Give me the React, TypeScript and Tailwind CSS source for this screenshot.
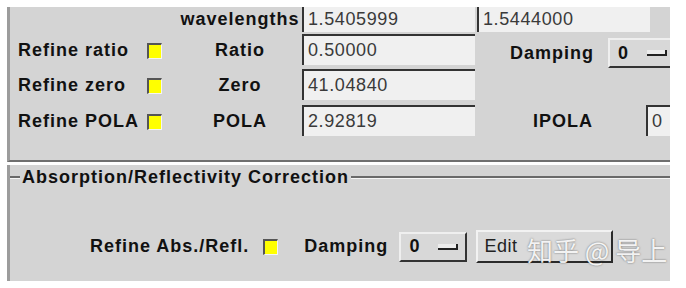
import React from "react";

function Field({ value, top = true, w = "w-[173px]" }: { value: string; top?: boolean; w?: string }) {
  return (
    <div
      className={`${w} shrink-0 h-full flex items-center bg-[#f0f0f0] border-l-2 border-l-[#333] pl-[4px] text-[18px] tracking-[0.6px] text-[#3a3a3a] font-normal ${
        top ? "border-t-2 border-t-[#333]" : ""
      }`}
    >
      {value}
    </div>
  );
}

function Check() {
  return (
    <div className="shrink-0 w-[15px] h-[16px] bg-[#ffff00] border-l-2 border-t-2 border-l-[#555] border-t-[#555] border-r border-b border-r-[#f4f4f4] border-b-[#f4f4f4]" />
  );
}

function Option({ w }: { w: string }) {
  return (
    <div
      className={`${w} shrink-0 h-[30px] flex items-center bg-[#d8d8d8] border-t-2 border-l-2 border-t-[#efefef] border-l-[#efefef] border-b-2 border-r-2 border-b-[#333] border-r-[#333]`}
    >
      <span className="pl-[8px] font-bold text-[18px]">0</span>
      <div className="ml-[18px] w-[20px] h-[6px] bg-[#ececec] border-b-2 border-r-2 border-b-[#222] border-r-[#222]" />
    </div>
  );
}

function App() {
  const rows = [
    { label: "Refine ratio", name: "Ratio", value: "0.50000" },
    { label: "Refine zero", name: "Zero", value: "41.04840" },
    { label: "Refine POLA", name: "POLA", value: "2.92819" },
  ];

  return (
    <div className="w-[686px] h-[288px] bg-white relative overflow-hidden font-['Liberation_Sans',Arial,sans-serif] text-[#111] font-bold tracking-[1px]">
      <div className="ml-[7px] pt-[7px] w-[663px]">
        {/* section 1 */}
        <div className="h-[155px] bg-[#d4d4d4] border-l-[3px] border-l-[#9c9c9c] border-b-2 border-b-[#6f6f6f] overflow-hidden">
          <div className="flex h-[25px] text-[18px]">
            <div className="w-[168px] shrink-0" />
            <div className="w-[124px] shrink-0 flex items-center justify-center">wavelengths</div>
            <Field value="1.5405999" top={false} />
            <div className="w-[2px] shrink-0" />
            <Field value="1.5444000" top={false} />
          </div>

          {rows.map((r, i) => (
            <div
              key={r.name}
              className={`flex h-[31px] text-[18px] ${i === 0 ? "mt-[2px]" : i === 1 ? "mt-[4px]" : "mt-[5px]"}`}
            >
              <div className="w-[137px] shrink-0 pl-[8px] pt-[2px] flex items-center whitespace-nowrap">{r.label}</div>
              <div className="flex items-center shrink-0 pt-[2px]">
                <Check />
              </div>
              <div className="w-[16px] shrink-0" />
              <div className="w-[124px] shrink-0 pt-[2px] flex items-center justify-center">{r.name}</div>
              <Field value={r.value} />
              {i === 0 && (
                <div className="flex shrink-0 items-center self-start mt-[4px] h-[30px] ml-[35px]">
                  <span>Damping</span>
                  <div className="ml-[14px]">
                    <Option w="w-[70px]" />
                  </div>
                </div>
              )}
              {i === 2 && (
                <div className="flex shrink-0 items-center ml-[58px]">
                  <span className="pt-[2px]">IPOLA</span>
                  <div className="ml-[53px] h-[31px]">
                    <Field value="0" w="w-[40px]" />
                  </div>
                </div>
              )}
            </div>
          ))}
        </div>

        <div className="h-[3px] bg-white" />

        {/* section 2 */}
        <div className="h-[116px] bg-[#d4d4d4] border-l-[3px] border-l-[#9c9c9c]">
          <div className="pt-[2px] h-[22px] flex items-center">
            <div className="w-[10px] h-[3px] border-t-2 border-t-[#6a6a6a] bg-[#f6f6f6]" />
            <span className="px-[2px] text-[18px] whitespace-nowrap">Absorption/Reflectivity Correction</span>
            <div className="flex-1 h-[3px] border-t-2 border-t-[#6a6a6a] bg-[#f6f6f6]" />
          </div>

          <div className="mt-[43px] ml-[80px] h-[33px] flex items-center text-[18px]">
            <span className="whitespace-nowrap">Refine Abs./Refl.</span>
            <div className="ml-[14px]">
              <Check />
            </div>
            <span className="ml-[26px]">Damping</span>
            <div className="ml-[11px]">
              <Option w="w-[68px]" />
            </div>
            <div className="ml-[9px] w-[137px] shrink-0 h-[33px] flex items-center overflow-hidden whitespace-nowrap bg-[#dadada] border-t-2 border-l-2 border-t-[#f2f2f2] border-l-[#f2f2f2] border-b-2 border-r-2 border-b-[#2a2a2a] border-r-[#2a2a2a] pl-[6px] font-normal text-[#222] tracking-[0.5px]">
              Edit
            </div>
          </div>
        </div>
      </div>

      {/* watermark */}
      <span className="absolute left-[527px] top-[230px] text-[26px] font-normal tracking-normal text-white/90 font-['Noto_Sans_CJK_SC',sans-serif] [text-shadow:0_0_2px_rgba(0,0,0,0.55)] whitespace-nowrap">
        知乎 @ 导上
      </span>
    </div>
  );
}

export default App;
